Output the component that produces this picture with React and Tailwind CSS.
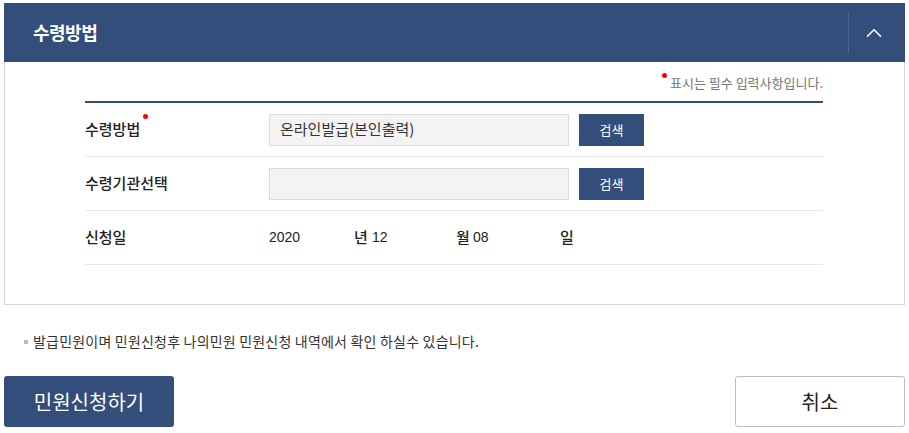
import { ChevronUp } from 'lucide-react';

const font = { fontFamily: '"Noto Sans CJK KR", "Noto Sans", sans-serif' };
const num = { fontFamily: '"Liberation Sans", Arial, sans-serif' };

function Row({ label, required, children }) {
  return (
    <div className="flex items-center h-[54px] border-b border-[#e8e8e8]">
      <div className="w-[184px] text-[15px] font-medium text-[#222]">
        <span className="relative">
          {label}
          {required && (
            <span className="absolute -right-[8px] -top-[4px] w-[5px] h-[5px] rounded-full bg-[#ff0000]" />
          )}
        </span>
      </div>
      <div className="flex-1 flex items-center">{children}</div>
    </div>
  );
}

function SearchField({ value }) {
  return (
    <div className="flex items-center gap-[10px]">
      <div className="w-[300px] h-[32px] bg-[#f3f3f3] border border-[#dcdcdc] flex items-center px-[10px] text-[15px] text-[#333]">
        {value}
      </div>
      <button className="w-[65px] h-[32px] bg-[#344e7b] text-white text-[13px]">검색</button>
    </div>
  );
}

export default function App() {
  return (
    <div className="w-[909px] h-[433px] bg-white pt-[3px] px-[4px]" style={font}>
      {/* Header */}
      <div className="h-[59px] bg-[#344e7b] flex items-center justify-between pl-[29px]">
        <h2 className="text-white text-[18px] font-bold tracking-[-0.5px]">수령방법</h2>
        <div className="h-[40px] w-[57px] pr-[6px] border-l border-[#4b6391] flex items-center justify-center">
          <ChevronUp className="w-[26px] h-[26px] text-white" strokeWidth={1.5} />
        </div>
      </div>

      {/* Panel */}
      <div className="h-[243px] border border-t-0 border-[#d6d6d6] pl-[80px] pr-[81px]">
        <div className="h-[39px] flex items-end justify-end pb-[9px]">
          <span className="relative text-[13px] text-[#777]">
            <span className="absolute -left-[8px] top-[0px] w-[5px] h-[5px] rounded-full bg-[#ff0000]" />
            표시는 필수 입력사항입니다.
          </span>
        </div>
        <div className="h-[2px] bg-[#344e7b]" />
        <Row label="수령방법" required>
          <SearchField value="온라인발급(본인출력)" />
        </Row>
        <Row label="수령기관선택">
          <SearchField value="" />
        </Row>
        <Row label="신청일">
          <div className="flex items-center text-[14px] text-[#222]">
            <span className="w-[85px]" style={num}>2020</span>
            <span className="w-[18px] text-[15px] font-medium">년</span>
            <span className="w-[84px]" style={num}>12</span>
            <span className="w-[17px] text-[15px] font-medium">월</span>
            <span className="w-[87px]" style={num}>08</span>
            <span className="text-[15px] font-medium">일</span>
          </div>
        </Row>
      </div>

      {/* Note */}
      <div className="mt-[26px] pl-[20px] flex items-center gap-[5px] text-[14px] tracking-[0.2px] text-[#333]">
        <span className="w-[4px] h-[4px] bg-[#bbb]" />
        발급민원이며 민원신청후 나의민원 민원신청 내역에서 확인 하실수 있습니다.
      </div>

      {/* Actions */}
      <div className="mt-[24px] flex justify-between">
        <button className="w-[170px] h-[51px] rounded-[3px] bg-[#344e7b] text-white text-[20px]">민원신청하기</button>
        <button className="w-[170px] h-[51px] rounded-[3px] bg-white border border-[#bdbdbd] text-[#222] text-[20px]">취소</button>
      </div>
    </div>
  );
}
